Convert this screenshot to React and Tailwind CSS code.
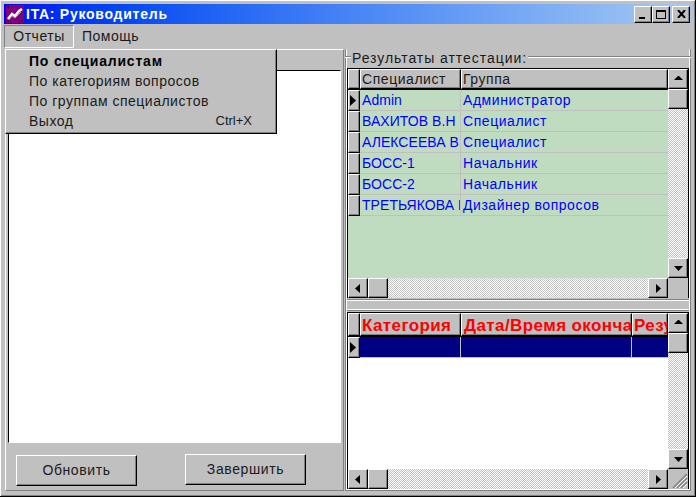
const font = { fontFamily: '"Liberation Sans", Arial, sans-serif' };

const raised = "bg-[#c0c0c0] border-t border-l border-t-white border-l-white border-b border-r border-b-black border-r-black shadow-[inset_-1px_-1px_0_#808080]";
const dither = "bg-[repeating-conic-gradient(#ffffff_0%_25%,#c0c0c0_0%_50%)] bg-size-[2px_2px]";

function Arrow({ dir }) {
  const pts = { up: "1,6 5,2 6,2 10,6", down: "1,3 10,3 5.5,8", left: "7,1 7,10 2,5.5", right: "3,1 3,10 8,5.5" }[dir];
  return (
    <svg width="11" height="11" viewBox="0 0 11 11" className="block"><polygon points={pts} fill="#000" /></svg>
  );
}

function ScrollBtn({ dir, className = "" }) {
  return <div className={`${raised} flex items-center justify-center shrink-0 ${className}`}><Arrow dir={dir} /></div>;
}

function VScroll({ thumbH = "h-[20px]" }) {
  return (
    <div className={`w-[20px] shrink-0 flex flex-col ${dither}`}>
      <ScrollBtn dir="up" className="h-[20px] w-[20px]" />
      <div className={`${raised} ${thumbH} w-[20px] shrink-0`} />
      <div className="flex-1" />
      <ScrollBtn dir="down" className="h-[20px] w-[20px]" />
    </div>
  );
}

function HScroll({ grip }) {
  return (
    <div className="h-[20px] shrink-0 flex">
      <div className={`flex-1 flex ${dither}`}>
        <ScrollBtn dir="left" className="w-[20px] h-[20px]" />
        <div className={`${raised} w-[20px] h-[20px] shrink-0`} />
        <div className="flex-1" />
        <ScrollBtn dir="right" className="w-[20px] h-[20px]" />
      </div>
      <div className="w-[20px] bg-[#c0c0c0] relative overflow-hidden">
        {grip && (
          <svg width="20" height="20" viewBox="0 0 20 20" className="block">
            <path d="M19 5 L5 19 M19 9 L9 19 M19 13 L13 19" stroke="#808080" strokeWidth="1.5" />
            <path d="M19 7 L7 19 M19 11 L11 19 M19 15 L15 19" stroke="#ffffff" strokeWidth="1" />
          </svg>
        )}
      </div>
    </div>
  );
}

function Indicator({ active, h }) {
  return (
    <div className={`${raised} w-[12px] shrink-0 flex items-center ${h}`}>
      {active && (
        <svg width="8" height="11" viewBox="0 0 8 11" className="block"><polygon points="1,0 1,11 7,5.5" fill="#000" /></svg>
      )}
    </div>
  );
}

const rows = [
  ["Admin", "Администратор"],
  ["ВАХИТОВ В.Н", "Специалист"],
  ["АЛЕКСЕЕВА В.Г", "Специалист"],
  ["БОСС-1", "Начальник"],
  ["БОСС-2", "Начальник"],
  ["ТРЕТЬЯКОВА Е.", "Дизайнер вопросов"],
];

const cellText = "text-[14px] tracking-[0.55px] whitespace-nowrap overflow-hidden";

function TopGrid() {
  return (
    <div className="h-[230px] shrink-0 border border-black border-b-0 flex flex-col">
      <div className="flex-1 flex min-h-0">
        <div className="flex-1 bg-[#c0dcc0] flex flex-col min-w-0">
          <div className="flex h-[21px] shrink-0 border-b border-black">
            <div className={`${raised} w-[12px] shrink-0`} />
            <div className={`${raised} w-[101px] shrink-0 pl-[1px] ${cellText} text-[#1a1a1a] leading-[18px]`}>Специалист</div>
            <div className={`${raised} flex-1 pl-[1px] ${cellText} text-[#1a1a1a] leading-[18px]`}>Группа</div>
          </div>
          {rows.map((r, i) => (
            <div key={i} className="flex h-[21px] shrink-0">
              <Indicator active={i === 0} h="h-[21px]" />
              <div className="w-[101px] shrink-0 pl-[2px] border-r border-b border-[#c0c0c0] text-[14px] tracking-[0.05px] whitespace-nowrap overflow-hidden text-[#0000ff] leading-[20px]">{r[0]}</div>
              <div className={`flex-1 pl-[2px] border-b border-[#c0c0c0] ${cellText} text-[#0000ff] leading-[20px]`}>{r[1]}</div>
            </div>
          ))}
        </div>
        <VScroll />
      </div>
      <HScroll />
    </div>
  );
}

function BottomGrid() {
  const head = "text-[17px] font-bold tracking-[0.4px] text-[#ff0000] whitespace-nowrap overflow-hidden leading-[23px]";
  return (
    <div className="flex-1 min-h-0 border border-black border-b-0 flex flex-col">
      <div className="flex-1 flex min-h-0">
        <div className="flex-1 bg-white flex flex-col min-w-0">
          <div className="flex h-[24px] shrink-0 border-b border-black">
            <div className={`${raised} w-[12px] shrink-0`} />
            <div className={`${raised} w-[101px] shrink-0 pl-[1px] ${head}`}>Категория</div>
            <div className={`${raised} w-[171px] shrink-0 pl-[2px] ${head}`}>Дата/Время окончания</div>
            <div className={`${raised} flex-1 pl-[1px] ${head}`}>Результат</div>
          </div>
          <div className="flex h-[21px] shrink-0">
            <Indicator active h="h-[21px]" />
            <div className="w-[101px] shrink-0 bg-[#000080] border-r border-b border-[#c0c0c0]" />
            <div className="w-[171px] shrink-0 bg-[#000080] border-r border-b border-[#c0c0c0]" />
            <div className="flex-1 bg-[#000080] border-b border-[#c0c0c0]" />
          </div>
        </div>
        <VScroll />
      </div>
      <HScroll grip />
    </div>
  );
}

function Dropdown() {
  const item = "h-[20px] leading-[20px] text-[14px] tracking-[0.5px] text-[#1a1a1a] pl-[23px] pr-[24px] flex justify-between";
  return (
    <div className={`absolute left-[5px] top-[49px] w-[272px] h-[85px] py-[1px] ${raised}`}>
      <div className={`${item} font-bold text-black tracking-[0.8px]`}>По специалистам</div>
      <div className={item}>По категориям вопросов</div>
      <div className={item}>По группам специалистов</div>
      <div className={item}><span>Выход</span><span className="text-[13px] tracking-normal">Ctrl+X</span></div>
    </div>
  );
}

function WinBtn({ children }) {
  return <div className={`${raised} w-[18px] h-[17px] flex items-center justify-center`}>{children}</div>;
}

function Btn({ label, className = "" }) {
  return (
    <div className={`${raised} w-[121px] h-[31px] flex items-center justify-center text-[14px] tracking-[0.6px] text-[#1a1a1a] ${className}`}>{label}</div>
  );
}

export default function App() {
  return (
    <div style={font} className="relative w-[696px] h-[497px] bg-[#c0c0c0] flex flex-col px-[4px] pt-[4px] pb-[5px] border-r border-b border-black shadow-[inset_1px_1px_0_#ffffff,inset_-1px_-1px_0_#808080] overflow-hidden">
      <div className="h-[20px] shrink-0 flex items-center bg-linear-to-r from-[#0000f0] to-[#a6caf0] pl-[2px] pr-[1px]">
        <svg width="18" height="18" viewBox="0 0 18 18" className="block shrink-0">
          <rect width="18" height="18" fill="#800080" />
          <path d="M2 14 L6 9 L9 11 L13 6 L16 4" stroke="#ffffff" strokeWidth="2.5" fill="none" />
          <path d="M2 16 L6 11 L9 13 L15 7" stroke="#c090c0" strokeWidth="1" fill="none" />
          <rect x="1" y="1" width="2" height="2" fill="#400040" />
          <rect x="15" y="15" width="2" height="2" fill="#400040" />
          <rect x="1" y="15" width="2" height="2" fill="#400040" />
        </svg>
        <span className="ml-[2px] text-white font-bold text-[14px] tracking-[0.75px] leading-none flex-1">ITA: Руководитель</span>
        <div className="flex">
          <WinBtn>
            <div className="w-[6px] h-[2px] bg-black mt-[7px] mr-[3px]" />
          </WinBtn>
          <WinBtn>
            <div className="w-[10px] h-[9px] border border-black border-t-2" />
          </WinBtn>
          <div className="w-[2px]" />
          <WinBtn>
            <svg width="9" height="8" viewBox="0 0 9 8"><path d="M1 0 L8 8 M8 0 L1 8" stroke="#000" strokeWidth="2" /></svg>
          </WinBtn>
        </div>
      </div>

      <div className="h-[24px] shrink-0 flex items-center text-[14px] tracking-[0.5px] text-[#1a1a1a] pt-[1px]">
        <div className="w-[70px] h-[23px] border border-t-[#808080] border-l-[#808080] border-r-white border-b-white flex items-center justify-center">Отчеты</div>
        <div className="ml-[8px]">Помощь</div>
      </div>

      <div className="flex-1 min-h-0 flex">
        <div className="w-[339px] ml-[1px] shrink-0 flex flex-col border-t border-l border-r border-b border-t-white border-l-white border-r-[#808080] border-b-[#808080] mt-[1px] p-[2px] pt-[8px]">
          <div className="h-[12px] shrink-0" />
          <div className="flex-1 min-h-0 bg-white border-t border-l border-black border-r-white border-b border-b-white border-r" />
          <div className="h-[45px] shrink-0 relative flex items-start pl-[8px] pt-[12px]">
            <Btn label="Обновить" />
            <Btn label="Завершить" className="ml-[48px] -mt-[1px]" />
          </div>
        </div>

        <div className="flex-1 min-w-0 flex flex-col ml-[1px] mt-[1px] relative border-x border-b border-[#808080] pl-[1px] pr-[1px] pb-[1px] shadow-[inset_1px_0_0_#ffffff,inset_-1px_0_0_#ffffff,inset_0_-1px_0_#ffffff]">
          <div className="h-[19px] shrink-0 relative -mx-[2px]">
            <div className="absolute left-0 right-0 top-[7px] h-[2px] border-t border-t-[#808080] border-b border-b-white" />
            <span className="absolute left-[6px] top-[1px] bg-[#c0c0c0] px-[1px] text-[14px] tracking-[0.95px] leading-[16px] text-[#1a1a1a] whitespace-nowrap">Результаты аттестации:</span>
          </div>
          <TopGrid />
          <div className="h-[12px] shrink-0 border-y border-y-[#808080] bg-[#c0c0c0] my-[1px] shadow-[inset_0_1px_0_#ffffff,inset_0_-1px_0_#ffffff]" />
          <BottomGrid />
        </div>
      </div>
      <Dropdown />
    </div>
  );
}
